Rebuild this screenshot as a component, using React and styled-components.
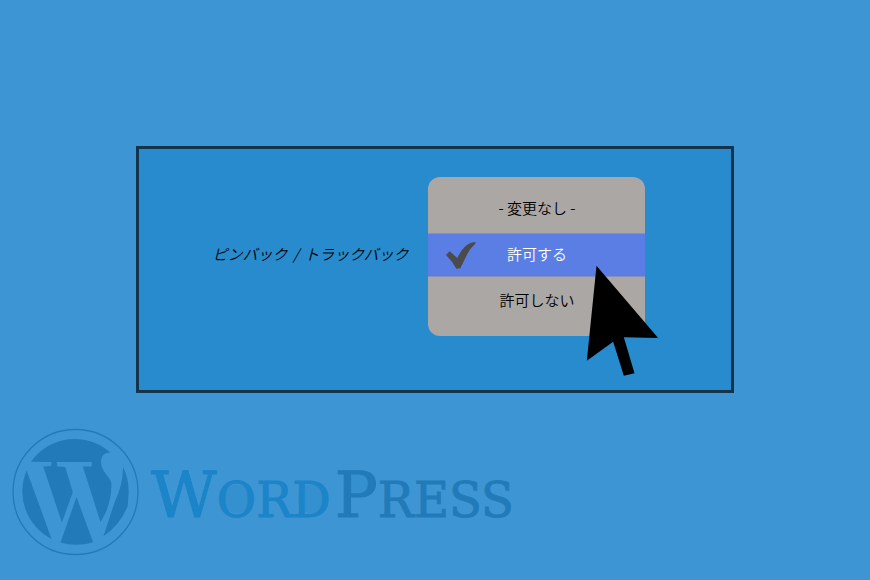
import React, { useState } from "react";
import styled, { createGlobalStyle } from "styled-components";

const Global = createGlobalStyle`
  *, *::before, *::after { box-sizing: border-box; }
  body {
    margin: 0;
    background: #3d96d3;
    font-family: "Noto Sans CJK JP", "Noto Sans", sans-serif;
    color: #000;
  }
`;

const Page = styled.div`
  display: flex;
  flex-direction: column;
  gap: 35px;
  padding: 146px 136px 0;
`;

const Panel = styled.main`
  display: flex;
  justify-content: center;
  align-items: flex-start;
  gap: 20px;
  padding: 28px 24px 54px 12px;
  border: 3px solid #14344b;
  background: #278bce;
`;

const FieldLabel = styled.span`
  padding-top: 65px;
  font-size: 15px;
  line-height: 24px;
  font-style: italic;
  font-weight: 350;
  white-space: nowrap;
`;

const Slash = styled.span`
  margin: 0 2px;
`;

const MenuWrap = styled.div`
  position: relative;
  width: 217px;
`;

const Menu = styled.div`
  display: flex;
  flex-direction: column;
  padding: 8px 0 11px;
  border-radius: 12px;
  background: #aba7a5;
`;

const Option = styled.button`
  position: relative;
  height: ${(p) => (p.$selected ? 44 : 48)}px;
  padding: 0 0 2px;
  border: 0;
  border-top: 1px solid ${(p) => (p.$selected ? "#8590bf" : "transparent")};
  border-bottom: 1px solid ${(p) => (p.$selected ? "#8590bf" : "transparent")};
  background: ${(p) => (p.$selected ? "#5b7ee5" : "transparent")};
  color: ${(p) => (p.$selected ? "#fff" : "inherit")};
  font-family: inherit;
  font-size: 15px;
  font-weight: 350;
  line-height: 24px;
  text-align: center;
  cursor: pointer;
`;

const Check = styled.svg`
  position: absolute;
  left: 18px;
  top: 8px;
  width: 30px;
  height: 27px;
  fill: #4b4b4b;
`;

const Pointer = styled.svg`
  position: absolute;
  left: 158px;
  top: 88px;
  width: 73px;
  height: 111px;
  pointer-events: none;
`;

const Brand = styled.footer`
  display: flex;
  align-items: center;
  gap: 12px;
  margin-left: -124px;
`;

const Emblem = styled.svg`
  flex: none;
  width: 127px;
  height: 128px;
  fill: #227bb8;
`;

const Wordmark = styled.div`
  display: flex;
  gap: 4px;
  padding-top: 10px;
  font-family: "DejaVu Serif", serif;
  font-size: 48px;
  line-height: 80px;
  white-space: nowrap;
`;

const Half = styled.span`
  color: ${(p) => p.$tone};
  -webkit-text-stroke: 1px ${(p) => p.$tone};
`;

const Initial = styled.span`
  font-size: 64px;
`;

const Round = styled.span`
  background: radial-gradient(ellipse 36% 26% at 50% 48%, #3590cf 98%, transparent 100%);
`;

const Bowl = styled.span`
  background: radial-gradient(ellipse 30% 15% at 54% 36%, #3590cf 98%, transparent 100%);
`;

const choices = ["- 変更なし -", "許可する", "許可しない"];

export default function App() {
  const [selected, setSelected] = useState(1);
  return (
    <>
      <Global />
      <Page>
        <Panel>
          <FieldLabel id="pingback-label">
            ピンバック <Slash>/</Slash> トラックバック
          </FieldLabel>
          <MenuWrap>
            <Menu role="listbox" aria-labelledby="pingback-label">
              {choices.map((text, i) => (
                <Option
                  key={text}
                  type="button"
                  role="option"
                  aria-selected={i === selected}
                  $selected={i === selected}
                  onClick={() => setSelected(i)}
                >
                  {i === selected && (
                    <Check viewBox="79 218 90 81" aria-hidden="true">
                      <path d="M79 257 L90 246 L113 266 Q124 242 137 231 Q149 220 161 219 L168 219 L168 222 Q151 238 143 254 L122 297 L110 298 Q99 277 79 257Z" />
                    </Check>
                  )}
                  {text}
                </Option>
              ))}
            </Menu>
            <Pointer viewBox="498 286 218 333" aria-hidden="true">
              <path d="M529 288 L714 505 L611 503 L643 611 L611 618 L579 516 L500 573Z" />
            </Pointer>
          </MenuWrap>
        </Panel>
        <Brand>
          <Emblem viewBox="36 24 382 384" aria-hidden="true">
            <circle cx="227" cy="216" r="188" fill="none" stroke="#227bb8" strokeWidth="4" />
            <path d="M93 125 A160 160 0 0 1 332 98 C312 96 303 109 304 128 C305 157 333 170 335 190 C336 235 323 275 302 306 L249 139 L273 139 Q277 138 276 126 L171 126 Q170 138 174 139 L196 141 L219 216 L186 308 L130 139 L152 138 Q156 135 154 126Z" />
            <path d="M80 151 L155 357 A160 160 0 0 1 80 151Z" />
            <path d="M230 231 L182 368 Q232 382 280 367Z" />
            <path d="M370 141 Q387 175 387 216 L384 258 Q362 315 311 349 L345 246 Q371 190 370 141Z" />
          </Emblem>
          <Wordmark>
            <Half $tone="#1c84c8">
              <Initial>W</Initial>
              <Round>O</Round>R<Round>D</Round>
            </Half>
            <Half $tone="#227bb8">
              <Initial>
                <Bowl>P</Bowl>
              </Initial>
              RESS
            </Half>
          </Wordmark>
        </Brand>
      </Page>
    </>
  );
}
